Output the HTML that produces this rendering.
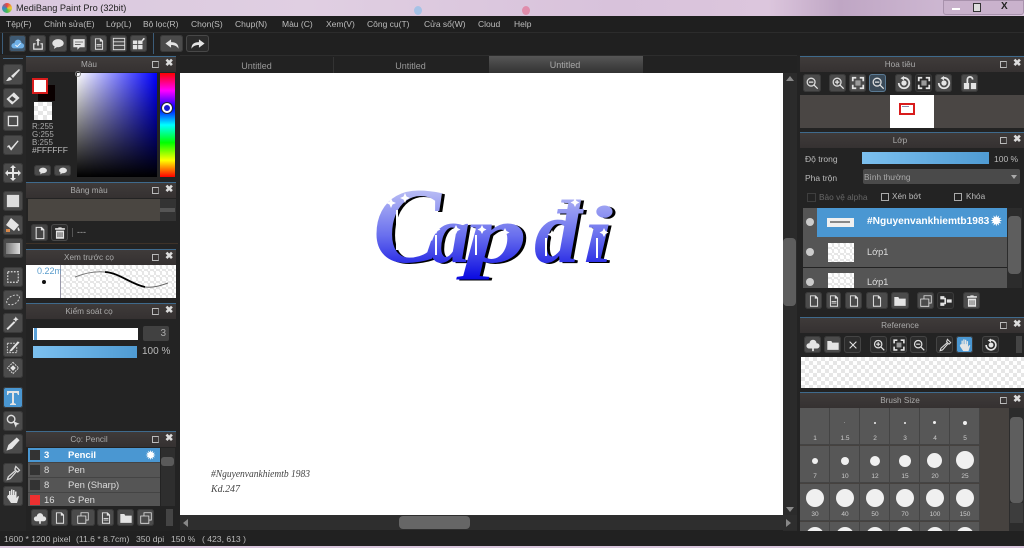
<!DOCTYPE html>
<html><head><meta charset="utf-8"><style>
html,body{margin:0;padding:0;width:1024px;height:548px;overflow:hidden;background:#212121}
body{position:relative;font-family:"Liberation Sans","Noto Sans CJK SC",sans-serif;color:#c9c9c9;font-size:9px;filter:blur(.35px)}
.a,.h,.b,.t,.l{position:absolute}
.a{display:block}
.t{white-space:nowrap;line-height:12px}
.h{box-sizing:border-box;padding-right:24px;background:linear-gradient(#3f3b3a,#353131);border-top:1px solid #3f6a8c;text-align:center;color:#aaa;font-size:8.200px;line-height:15px;height:16px}
.h i{position:absolute;top:2px;width:8px;height:8px}
.h .p{right:17px;border:1px solid #bbb;width:5px;height:5px;top:4px;border-right-color:#888}
.h .x{right:3px;color:#ddd;font-style:normal;font-weight:bold;font-size:10px;line-height:10px;top:2px}
.b{background:#4b4b4b;border-radius:3px;box-shadow:inset 0 0 0 1px #3a3a3a}
.b svg{position:absolute;left:50%;top:50%;transform:translate(-50%,-50%);fill:#e4e4e4;stroke:none}
.k{background-color:#fff;background-image:linear-gradient(45deg,#e6e6e6 25%,transparent 25%,transparent 75%,#e6e6e6 75%),linear-gradient(45deg,#e6e6e6 25%,transparent 25%,transparent 75%,#e6e6e6 75%);background-size:8px 8px;background-position:0 0,4px 4px}
.m{position:absolute;top:18px;font-size:8.500px;line-height:13px;color:#bdbdbd;white-space:nowrap}
.r{position:absolute;background:#555;border-bottom:1px solid #444;color:#ddd;font-size:9.500px}
.c{position:absolute;background:#575757;box-shadow:inset -1px -1px 0 #444;width:30px;height:37px}
.c b{position:absolute;left:0;right:0;top:27px;text-align:center;font-weight:normal;font-size:6.500px;color:#ccc;line-height:8px}
.c u{position:absolute;background:#f0f0f0;border-radius:50%}
.s{position:absolute;top:533px;font-size:8.600px;line-height:12px;color:#bbb;white-space:nowrap}
</style></head><body>
<svg width="0" height="0" style="position:absolute"><defs>
<symbol id="brush" viewBox="0 0 16 16"><path d="M14 2 6 9l2 2 7-8zM5 10c-2 0-2 2-4 4 3 0 6-1 6-2z"/></symbol>
<symbol id="eraser" viewBox="0 0 16 16"><path d="M9 2 15 8 7 15 1 9z"/><path d="M4 9l3-3 4 3-3 3z" fill="#444"/></symbol>
<symbol id="rect" viewBox="0 0 16 16"><path d="M2 2h12v12H2zM3.500 3.500v9h9v-9z" fill-rule="evenodd"/></symbol>
<symbol id="line" viewBox="0 0 16 16"><path d="M2 9l2-1 2 3 7-8 1 1-8 10-3-4-1 1z"/></symbol>
<symbol id="move" viewBox="0 0 16 16"><path d="M8 0l3 3H9v4h4V5l3 3-3 3V9H9v4h2l-3 3-3-3h2V9H3v2L0 8l3-3v2h4V3H5z"/></symbol>
<symbol id="fill" viewBox="0 0 16 16"><path d="M1 1h14v14H1z" fill="#ddd"/></symbol>
<symbol id="bucket" viewBox="0 0 16 16"><path d="M6 1l8 7-5 6-8-6zM13 10c2 2 2 4 1 4s-2-2-1-4z"/><path d="M1 12h4v3H1z" fill="#d8884a"/></symbol>
<symbol id="grad" viewBox="0 0 16 16"><path d="M1 3h14v11H1z" fill="url(#gr)"/></symbol>
<symbol id="marq" viewBox="0 0 16 16"><path d="M2 2h12v12H2z" fill="none" stroke="#ddd" stroke-dasharray="2 1.500" stroke-width="1.300"/></symbol>
<symbol id="lasso" viewBox="0 0 16 16"><path d="M2 11c-2-3 4-8 9-8s4 4 1 7-8 4-10 1z" fill="none" stroke="#ccc" stroke-dasharray="2 1.500"/></symbol>
<symbol id="wand" viewBox="0 0 16 16"><path d="M1 14l8-8 1.500 1.500-8 8zM11 1l1 2 2 1-2 1-1 2-1-2-2-1 2-1z"/></symbol>
<symbol id="edit" viewBox="0 0 16 16"><path d="M2 4h8M2 4v10h10V8" fill="none" stroke="#ccc" stroke-dasharray="2 1"/><path d="M5 11l8-9 2 1-8 9-3 1z"/></symbol>
<symbol id="sele" viewBox="0 0 16 16"><path d="M8 2l6 6-6 6-6-6z" fill="none" stroke="#ddd" stroke-dasharray="2 1"/><path d="M8 5l3 3-3 3-3-3z"/></symbol>
<symbol id="tt" viewBox="0 0 16 16"><path d="M2 1h12v4h-1l-1-2H9v10l2 1v1H5v-1l2-1V3H4L3 5H2z"/></symbol>
<symbol id="las2" viewBox="0 0 16 16"><circle cx="6" cy="6" r="4" fill="none" stroke="#ddd" stroke-width="1.500"/><path d="M8 8l7 3-3 1-1 3z"/></symbol>
<symbol id="pen" viewBox="0 0 16 16"><path d="M12 1l3 3-8 9-6 2 2-6z"/></symbol>
<symbol id="drop" viewBox="0 0 16 16"><path d="M11 1l4 4-2 2-1-1-7 8-3 1 1-3 8-7-1-1z" fill="none" stroke="#ddd" stroke-width="1.300"/></symbol>
<symbol id="hand" viewBox="0 0 16 16"><path d="M3 7l1 0V3h1.500v4H6V1.500h1.500V7H8V2h1.500v5h.5V3.500h1.500V10l1.500-2 1 .5L12 15H6L2 9z"/></symbol>
<symbol id="doc" viewBox="0 0 16 16"><path d="M3 1h7l3 3v11H3zM4.200 2.200v11.600h7.600V5H9V2.200z" fill-rule="evenodd"/></symbol>
<symbol id="trash" viewBox="0 0 16 16"><path d="M6 1h4v1h4v2H2V2h4zM3 5h10v10H3zM5 7v6h1V7zM7.500 7v6h1V7zM10 7v6h1V7z" fill-rule="evenodd"/></symbol>
<symbol id="cloud" viewBox="0 0 16 16"><path d="M4 6a4 4 0 0 1 8 0 3 3 0 0 1 1 6H9v3H7v-3H3a3 3 0 0 1 1-6z"/></symbol>
<symbol id="cloudb" viewBox="0 0 16 16"><path d="M4 7a4 4 0 0 1 8 0 3 3 0 0 1 0 6H3a3 3 0 0 1 1-6z" fill="#6fb0e6"/><path d="M5 9l2 2 4-4" fill="none" stroke="#fff"/></symbol>
<symbol id="share" viewBox="0 0 16 16"><path d="M8 1l3 3H9v6H7V4H5zM2 7h3v1.500H3.500v5h9v-5H11V7h3v8H2z"/></symbol>
<symbol id="bub" viewBox="0 0 16 16"><ellipse cx="8" cy="7" rx="7" ry="5"/><path d="M4 10l-1 4 5-3z"/></symbol>
<symbol id="chat" viewBox="0 0 16 16"><path d="M1 2h14v10H9l-3 3v-3H1z"/><path d="M3 5h10v1H3zM3 8h7v1H3z" fill="#555"/></symbol>
<symbol id="page" viewBox="0 0 16 16"><path d="M3 1h7l3 3v11H3zM4.200 2.200v11.600h7.600V5H9V2.200zM5 8h6v1H5zM5 10h6v1H5z" fill-rule="evenodd"/></symbol>
<symbol id="list" viewBox="0 0 16 16"><path d="M1 1h14v14H1zM2 2v3h12V2zM2 6v3h12V6zM2 10v4h12v-4z" fill-rule="evenodd"/></symbol>
<symbol id="grid" viewBox="0 0 16 16"><path d="M1 4h5v4H1zM7 4h5v4H7zM1 9h5v5H1zM7 9h5v5H7zM13 1l2 1-3 3-1-1z"/></symbol>
<symbol id="undo" viewBox="0 0 16 16"><path d="M7 3v3c5 0 8 2 8 7-2-3-4-4-8-4v3L1 7.500z"/></symbol>
<symbol id="redo" viewBox="0 0 16 16"><path d="M9 3v3C4 6 1 8 1 13c2-3 4-4 8-4v3l6-4.500z"/></symbol>
<symbol id="folder" viewBox="0 0 16 16"><path d="M1 3h5l1 2h8v9H1z"/></symbol>
<symbol id="copy" viewBox="0 0 16 16"><path d="M5 1h10v10h-3v4H1V5h4zM6 2v3h6v5h2V2zM2 6v8h9V6z" fill-rule="evenodd"/></symbol>
<symbol id="zi" viewBox="0 0 16 16"><circle cx="7" cy="7" r="4.500" fill="none" stroke="#ddd" stroke-width="1.500"/><path d="M10 11l1-1 4 4-1 1zM4.500 6.300h5v1.400h-5zM6.300 4.500h1.400v5H6.300z"/></symbol>
<symbol id="zo" viewBox="0 0 16 16"><circle cx="7" cy="7" r="4.500" fill="none" stroke="#ddd" stroke-width="1.500"/><path d="M10 11l1-1 4 4-1 1zM4.500 6.300h5v1.400h-5z"/></symbol>
<symbol id="fit" viewBox="0 0 16 16"><path d="M1 1h5v2H3v3H1zM10 1h5v5h-2V3h-3zM1 10h2v3h3v2H1zM13 10h2v5h-5v-2h3z"/><path d="M5 5h6v6H5z" fill="#999"/></symbol>
<symbol id="rot" viewBox="0 0 16 16"><path d="M8 1a7 7 0 1 1-7 7h2a5 5 0 1 0 5-5z"/><circle cx="8" cy="8" r="3"/><path d="M8 0v5L4 2.500z"/></symbol>
<symbol id="lock" viewBox="0 0 16 16"><path d="M1 8h6v7H1zM9 8h6v7H9zM4 8V4a4 4 0 0 1 8 0h-2a2 2 0 0 0-4 0v4z"/></symbol>
<symbol id="x" viewBox="0 0 16 16"><path d="M4 3l4 4 4-4 1 1-4 4 4 4-1 1-4-4-4 4-1-1 4-4-4-4z"/></symbol>
<symbol id="merge" viewBox="0 0 16 16"><path d="M1 2h5v4H1zM1 10h5v4H1zM9 6h6v4H9zM6 4h2v8H6z"/></symbol>
<linearGradient id="gr" x1="0" x2="1" y1="0" y2="0"><stop offset="0" stop-color="#777"/><stop offset="1" stop-color="#ddd"/></linearGradient>
</defs></svg>

<!-- title bar -->
<div class="a" style="left:0;top:0;width:1024px;height:16px;background:linear-gradient(90deg,#d9c8de,#e0cfe2 30%,#d8c2db 60%,#dcc6dd 75%,#bfa6c4 82%,#d8c4dc)"></div>
<div class="a" style="left:414px;top:6px;width:8px;height:9px;border-radius:50%;background:#a5c2e6"></div>
<div class="a" style="left:522px;top:6px;width:8px;height:9px;border-radius:50%;background:#e08dab"></div>
<div class="a" style="left:2px;top:3px;width:10px;height:10px;border-radius:50%;background:conic-gradient(#e44,#ec3,#4b5,#38c,#e44)"></div>
<div class="t" style="left:16px;top:2px;color:#222;font-size:9.200px">MediBang Paint Pro (32bit)</div>
<div class="a" style="left:943px;top:0;height:15px;background:#c9b2cc;border:1px solid #a892ac;border-radius:0 0 3px 3px;box-sizing:border-box;width:81px"></div>
<div class="a" style="left:952px;top:8px;width:8px;height:2px;background:#fff"></div>
<div class="a" style="left:973px;top:3px;width:6px;height:7px;border:1px solid #333;background:#ddd"></div>
<div class="t" style="left:1001px;top:1px;color:#222;font-weight:bold;font-size:10px">X</div>

<!-- menu -->
<div class="a" style="left:0;top:16px;width:1024px;height:16px;background:#1f1f1f"></div>
<div class="m" style="left:6px">Tệp(F)</div><div class="m" style="left:44px">Chỉnh sửa(E)</div><div class="m" style="left:106px">Lớp(L)</div><div class="m" style="left:143px">Bộ lọc(R)</div><div class="m" style="left:191px">Chọn(S)</div><div class="m" style="left:235px">Chụp(N)</div><div class="m" style="left:282px">Màu (C)</div><div class="m" style="left:326px">Xem(V)</div><div class="m" style="left:367px">Công cụ(T)</div><div class="m" style="left:424px">Cửa sổ(W)</div><div class="m" style="left:478px">Cloud</div><div class="m" style="left:514px">Help</div>

<!-- toolbar -->
<div class="a" style="left:0;top:32px;width:1024px;height:23px;background:#202020;border-top:1px solid #2c2c2c;box-sizing:border-box"></div>
<div class="a" style="left:2px;top:33px;width:1px;height:21px;background:#3c5c78"></div>
<div class="a" style="left:153px;top:33px;width:1px;height:21px;background:#3c5c78"></div>
<div class="b" style="left:9px;top:35px;width:17px;height:17px;background:#3f5a72"><svg width="14" height="14"><use href="#cloudb"/></svg></div>
<div class="b" style="left:29px;top:35px;width:17px;height:17px"><svg width="13" height="13"><use href="#share"/></svg></div>
<div class="b" style="left:49px;top:35px;width:18px;height:17px"><svg width="13" height="13"><use href="#bub"/></svg></div>
<div class="b" style="left:70px;top:35px;width:17px;height:17px"><svg width="13" height="13"><use href="#chat"/></svg></div>
<div class="b" style="left:90px;top:35px;width:17px;height:17px"><svg width="13" height="13"><use href="#page"/></svg></div>
<div class="b" style="left:110px;top:35px;width:17px;height:17px"><svg width="14" height="14"><use href="#list"/></svg></div>
<div class="b" style="left:130px;top:35px;width:17px;height:17px"><svg width="14" height="14"><use href="#grid"/></svg></div>
<div class="b" style="left:160px;top:35px;width:23px;height:17px"><svg width="15" height="15"><use href="#undo"/></svg></div>
<div class="b" style="left:186px;top:35px;width:23px;height:17px;background:#2a2a2a;box-shadow:inset 0 0 0 1px #484848"><svg width="15" height="15"><use href="#redo"/></svg></div>

<!-- left tools -->
<div class="a" style="left:0;top:55px;width:26px;height:476px;background:#262626"></div>
<div class="a" style="left:3px;top:58px;width:20px;height:1px;background:#4c6a84"></div>
<div class="b" style="left:3px;top:64px;width:20px;height:21px"><svg width="16" height="16"><use href="#brush"/></svg></div>
<div class="b" style="left:3px;top:88px;width:20px;height:20px"><svg width="15" height="15"><use href="#eraser"/></svg></div>
<div class="b" style="left:3px;top:111px;width:20px;height:20px"><svg width="14" height="14"><use href="#rect"/></svg></div>
<div class="b" style="left:3px;top:135px;width:20px;height:20px"><svg width="15" height="15"><use href="#line"/></svg></div>
<div class="b" style="left:3px;top:163px;width:20px;height:20px"><svg width="16" height="16"><use href="#move"/></svg></div>
<div class="b" style="left:3px;top:191px;width:20px;height:20px"><svg width="14" height="14"><use href="#fill"/></svg></div>
<div class="b" style="left:3px;top:215px;width:20px;height:20px"><svg width="16" height="16"><use href="#bucket"/></svg></div>
<div class="b" style="left:3px;top:238px;width:20px;height:20px"><svg width="16" height="16"><use href="#grad"/></svg></div>
<div class="b" style="left:3px;top:267px;width:20px;height:20px"><svg width="14" height="14"><use href="#marq"/></svg></div>
<div class="b" style="left:3px;top:290px;width:20px;height:20px"><svg width="16" height="16"><use href="#lasso"/></svg></div>
<div class="b" style="left:3px;top:313px;width:20px;height:20px"><svg width="15" height="15"><use href="#wand"/></svg></div>
<div class="b" style="left:3px;top:337px;width:20px;height:20px"><svg width="15" height="15"><use href="#edit"/></svg></div>
<div class="b" style="left:3px;top:358px;width:20px;height:20px"><svg width="15" height="15"><use href="#sele"/></svg></div>
<div class="b" style="left:3px;top:387px;width:20px;height:21px;background:#4a97d2"><svg width="16" height="16"><use href="#tt"/></svg></div>
<div class="b" style="left:3px;top:411px;width:20px;height:20px"><svg width="15" height="15"><use href="#las2"/></svg></div>
<div class="b" style="left:3px;top:434px;width:20px;height:20px"><svg width="15" height="15"><use href="#pen"/></svg></div>
<div class="b" style="left:3px;top:463px;width:20px;height:20px"><svg width="15" height="15"><use href="#drop"/></svg></div>
<div class="b" style="left:3px;top:486px;width:20px;height:20px"><svg width="16" height="16"><use href="#hand"/></svg></div>

<!-- left panel background -->
<div class="a" style="left:26px;top:55px;width:154px;height:476px;background:#232323"></div>

<!-- Màu -->
<div class="h" style="left:26px;top:56px;width:150px">Màu<i class="p"></i><i class="x">✖</i></div>
<div class="a" style="left:38px;top:85px;width:17px;height:16px;background:#0a0000"></div>
<div class="a" style="left:32px;top:78px;width:12px;height:12px;background:#fff;border:2px solid #d81c1c"></div>
<div class="a k" style="left:34px;top:102px;width:18px;height:18px;background-size:9px 9px"></div>
<div class="t" style="left:32px;top:123px;font-size:8px;line-height:8px;color:#aaa">R:255<br>G:255<br>B:255</div>
<div class="a" style="left:30px;top:145px;width:40px;height:4px;background:#232323"></div>
<div class="t" style="left:32px;top:145px;font-size:8.500px;line-height:10px;color:#bbb">#FFFFFF</div>
<div class="b" style="left:34px;top:165px;width:17px;height:11px"><svg width="9" height="9"><use href="#bub"/></svg></div>
<div class="b" style="left:54px;top:165px;width:17px;height:11px"><svg width="9" height="9"><use href="#bub"/></svg></div>
<div class="a" style="left:77px;top:73px;width:80px;height:104px;background:linear-gradient(transparent,#000),linear-gradient(90deg,#fff,#0000ff)"></div>
<div class="a" style="left:77px;top:73px;width:4px;height:4px;border:1px solid #888;border-radius:50%;transform:translate(-2px,-2px)"></div>
<div class="a" style="left:160px;top:73px;width:15px;height:104px;background:linear-gradient(#f00,#f0f 17%,#00f 34%,#0ff 50%,#0f0 67%,#ff0 84%,#f00)"></div>
<div class="a" style="left:162px;top:103px;width:6px;height:6px;border:2px solid #fff;border-radius:50%;background:#1a1ad0;box-shadow:0 0 0 1px #223"></div>

<!-- Bảng màu -->
<div class="h" style="left:26px;top:182px;width:150px">Bảng màu<i class="p"></i><i class="x">✖</i></div>
<div class="a" style="left:28px;top:199px;width:132px;height:22px;background:#4a4641"></div>
<div class="a" style="left:160px;top:199px;width:16px;height:22px;background:#333"></div>
<div class="a" style="left:160px;top:208px;width:15px;height:4px;background:#555"></div>
<div class="b" style="left:31px;top:224px;width:17px;height:17px;background:#444"><svg width="14" height="14"><use href="#doc"/></svg></div>
<div class="b" style="left:51px;top:224px;width:17px;height:17px;background:#2c2c2c;box-shadow:inset 0 0 0 1px #4a4a4a"><svg width="13" height="13"><use href="#trash"/></svg></div>
<div class="a" style="left:72px;top:228px;width:1px;height:9px;background:#555"></div>
<div class="t" style="left:77px;top:226px;color:#aaa">---</div>
<div class="a" style="left:26px;top:243px;width:152px;height:1px;background:#3e3228"></div>

<!-- Xem trước -->
<div class="h" style="left:26px;top:249px;width:150px">Xem trước cọ<i class="p"></i><i class="x">✖</i></div>
<div class="a k" style="left:60px;top:265px;width:116px;height:33px;background-size:6px 6px"></div>
<div class="a" style="left:26px;top:265px;width:34px;height:33px;background:#fff;border-right:1px solid #99a"></div>
<div class="t" style="left:37px;top:265px;width:24px;overflow:hidden;color:#5a9ccc;font-size:9px">0.22mm</div>
<div class="a" style="left:42px;top:280px;width:4px;height:4px;border-radius:50%;background:#111"></div>
<svg class="a" style="left:60px;top:265px" width="116" height="33"><path d="M15 12C25 8 35 6 45 7" fill="none" stroke="#777" stroke-width="1"/><path d="M45 7C60 8 70 19 85 22" fill="none" stroke="#000" stroke-width="1.800"/><path d="M85 22C95 23 102 20 108 18" fill="none" stroke="#666" stroke-width="1"/></svg>

<!-- Kiểm soát -->
<div class="h" style="left:26px;top:303px;width:150px">Kiểm soát cọ<i class="p"></i><i class="x">✖</i></div>
<div class="a" style="left:33px;top:328px;width:105px;height:12px;background:#fff"></div>
<div class="a" style="left:34px;top:328px;width:3px;height:12px;background:#5aa0d8"></div>
<div class="a" style="left:143px;top:326px;width:26px;height:15px;background:#414141;border-radius:2px"></div>
<div class="t" style="left:143px;top:328px;width:23px;text-align:right;font-size:10px;color:#aaa">3</div>
<div class="a" style="left:33px;top:346px;width:104px;height:12px;background:linear-gradient(90deg,#7cc0ef,#4f9bd3)"></div>
<div class="t" style="left:142px;top:346px;font-size:10px;color:#bbb">100 %</div>

<!-- Cọ -->
<div class="h" style="left:26px;top:431px;width:150px">Cọ: Pencil<i class="p"></i><i class="x">✖</i></div>
<div class="r" style="left:28px;top:448px;width:132px;height:14px;background:#4a97d2;color:#fff;font-weight:bold"><div class="a" style="left:2px;top:2px;width:10px;height:10px;background:#333"></div><span class="t" style="left:16px;top:2px">3</span><span class="t" style="left:40px;top:2px">Pencil</span><span class="t" style="left:118px;top:2px;font-size:11px">✹</span></div>
<div class="r" style="left:28px;top:463px;width:132px;height:14px"><div class="a" style="left:2px;top:2px;width:10px;height:10px;background:#333"></div><span class="t" style="left:16px;top:2px">8</span><span class="t" style="left:40px;top:2px">Pen</span></div>
<div class="r" style="left:28px;top:478px;width:132px;height:14px"><div class="a" style="left:2px;top:2px;width:10px;height:10px;background:#333"></div><span class="t" style="left:16px;top:2px">8</span><span class="t" style="left:40px;top:2px">Pen (Sharp)</span></div>
<div class="r" style="left:28px;top:493px;width:132px;height:13px;border:0"><div class="a" style="left:2px;top:2px;width:10px;height:10px;background:#ee3030"></div><span class="t" style="left:16px;top:2px">16</span><span class="t" style="left:40px;top:2px">G Pen</span></div>
<div class="a" style="left:161px;top:448px;width:14px;height:58px;background:#2e2e2e"></div>
<div class="a" style="left:161px;top:457px;width:13px;height:9px;background:#5a5a5a;border-radius:3px"></div>
<div class="b" style="left:31px;top:509px;width:17px;height:17px"><svg width="13" height="13"><use href="#cloud"/></svg></div>
<div class="b" style="left:51px;top:509px;width:17px;height:17px"><svg width="13" height="13"><use href="#doc"/></svg></div>
<div class="b" style="left:71px;top:509px;width:24px;height:17px"><svg width="13" height="13"><use href="#copy"/></svg></div>
<div class="b" style="left:97px;top:509px;width:17px;height:17px"><svg width="13" height="13"><use href="#page"/></svg></div>
<div class="b" style="left:117px;top:509px;width:17px;height:17px"><svg width="13" height="13"><use href="#folder"/></svg></div>
<div class="b" style="left:137px;top:509px;width:17px;height:17px"><svg width="13" height="13"><use href="#copy"/></svg></div>
<div class="a" style="left:166px;top:509px;width:7px;height:17px;background:#444"></div>

<!-- tabs -->
<div class="a" style="left:180px;top:55px;width:620px;height:18px;background:#222;border-top:1px solid #2d2d2d;box-sizing:border-box"></div>
<div class="t" style="left:180px;top:60px;width:153px;text-align:center;color:#999">Untitled</div>
<div class="a" style="left:333px;top:57px;width:1px;height:16px;background:#333"></div>
<div class="t" style="left:333px;top:60px;width:155px;text-align:center;color:#999">Untitled</div>
<div class="a" style="left:489px;top:56px;width:154px;height:17px;background:linear-gradient(#565656,#333)"></div>
<div class="t" style="left:488px;top:59px;width:154px;text-align:center;color:#aaa">Untitled</div>

<!-- canvas -->
<div class="a" style="left:180px;top:73px;width:603px;height:442px;background:#fff"></div>
<svg class="a" style="left:180px;top:73px" width="603" height="442">
<defs><linearGradient id="tg" gradientUnits="userSpaceOnUse" x1="0" x2="0" y1="117" y2="207"><stop offset="0" stop-color="#b9bdf4"/><stop offset=".5" stop-color="#6a70ee"/><stop offset="1" stop-color="#0808e0"/></linearGradient></defs>
<g font-family="Liberation Serif,serif" font-style="italic" font-weight="bold">
<g fill="#000" transform="translate(3,1)">
<text x="193" y="189" font-size="108" textLength="68" lengthAdjust="spacingAndGlyphs">C</text>
<text x="250" y="189" font-size="82" textLength="40" lengthAdjust="spacingAndGlyphs">a</text>
<text x="285" y="189" font-size="82" textLength="62" lengthAdjust="spacingAndGlyphs">p</text>
<text x="354" y="189" font-size="90" textLength="46" lengthAdjust="spacingAndGlyphs">đ</text>
<text x="403" y="189" font-size="82" textLength="30" lengthAdjust="spacingAndGlyphs">i</text>
</g>
<g fill="url(#tg)">
<text x="193" y="189" font-size="108" textLength="68" lengthAdjust="spacingAndGlyphs">C</text>
<text x="250" y="189" font-size="82" textLength="40" lengthAdjust="spacingAndGlyphs">a</text>
<text x="285" y="189" font-size="82" textLength="62" lengthAdjust="spacingAndGlyphs">p</text>
<text x="354" y="189" font-size="90" textLength="46" lengthAdjust="spacingAndGlyphs">đ</text>
<text x="403" y="189" font-size="82" textLength="30" lengthAdjust="spacingAndGlyphs">i</text>
</g>
</g>
<path d="M217 137v40M256 162v20M296 162v20M366 165v18M417 165v20" stroke="#fff" stroke-width="2" fill="none"/>
<path fill="#fff" d="M211 125l1.500 3.500 3.500 1.500-3.500 1.500-1.500 3.500-1.500-3.500-3.500-1.500 3.500-1.500zM225 120l1.500 3.500 3.500 1.500-3.500 1.500-1.500 3.500-1.500-3.500-3.500-1.500 3.500-1.500zM230 131l1.500 3.500 3.500 1.500-3.500 1.500-1.500 3.500-1.500-3.500-3.500-1.500 3.500-1.500zM256 152l1.500 3 3 1.500-3 1.500-1.500 3-1.500-3-3-1.500 3-1.500zM276 152l1.500 3 3 1.500-3 1.500-1.500 3-1.500-3-3-1.500 3-1.500zM302 152l1.500 3 3 1.500-3 1.500-1.500 3-1.500-3-3-1.500 3-1.500zM325 155l1.500 3 3 1.500-3 1.500-1.500 3-1.500-3-3-1.500 3-1.500zM372 157l1.500 3 3 1.500-3 1.500-1.500 3-1.500-3-3-1.500 3-1.500zM395 125l1.500 3 3 1.500-3 1.500-1.500 3-1.500-3-3-1.500 3-1.500zM424 155l1.500 3 3 1.500-3 1.500-1.500 3-1.500-3-3-1.500 3-1.500z"/>
<g font-family="Liberation Serif,serif" font-style="italic" fill="#444" font-size="11">
<text x="31" y="404" textLength="99" lengthAdjust="spacingAndGlyphs">#Nguyenvankhiemtb 1983</text>
<text x="31" y="419" textLength="29" lengthAdjust="spacingAndGlyphs">Kd.247</text>
</g>
</svg>

<!-- scrollbars -->
<div class="a" style="left:783px;top:73px;width:14px;height:458px;background:#2b2b2b"></div>
<div class="a" style="left:783px;top:238px;width:13px;height:68px;background:#5d5d5d;border-radius:4px"></div>
<div class="a" style="left:180px;top:515px;width:617px;height:15px;background:#2e2e2e"></div>
<div class="a" style="left:399px;top:516px;width:71px;height:13px;background:#666;border-radius:4px"></div>
<div class="a" style="left:183px;top:519px;width:0;height:0;border:4px solid transparent;border-right:5px solid #888;border-left:0"></div>
<div class="a" style="left:786px;top:519px;width:0;height:0;border:4px solid transparent;border-left:5px solid #888;border-right:0"></div>
<div class="a" style="left:786px;top:76px;width:0;height:0;border:4px solid transparent;border-bottom:5px solid #888;border-top:0"></div>
<div class="a" style="left:786px;top:507px;width:0;height:0;border:4px solid transparent;border-top:5px solid #888;border-bottom:0"></div>

<!-- right panel -->
<div class="a" style="left:797px;top:55px;width:227px;height:476px;background:#232323"></div>
<div class="h" style="left:800px;top:56px;width:224px">Hoa tiêu<i class="p"></i><i class="x">✖</i></div>
<div class="b" style="left:803px;top:74px;width:18px;height:18px"><svg width="14" height="14"><use href="#zo"/></svg></div>
<div class="b" style="left:829px;top:74px;width:17px;height:18px"><svg width="14" height="14"><use href="#zi"/></svg></div>
<div class="b" style="left:849px;top:74px;width:17px;height:18px"><svg width="14" height="14"><use href="#fit"/></svg></div>
<div class="b" style="left:869px;top:74px;width:17px;height:18px;background:#3a4a58;box-shadow:inset 0 0 0 1px #5a7a94"><svg width="14" height="14"><use href="#zo"/></svg></div>
<div class="b" style="left:895px;top:74px;width:17px;height:18px"><svg width="14" height="14"><use href="#rot"/></svg></div>
<div class="b" style="left:915px;top:74px;width:17px;height:18px;background:#2a2a2a"><svg width="14" height="14"><use href="#fit"/></svg></div>
<div class="b" style="left:935px;top:74px;width:17px;height:18px"><svg width="14" height="14"><use href="#rot"/></svg></div>
<div class="b" style="left:961px;top:74px;width:17px;height:18px"><svg width="14" height="14"><use href="#lock"/></svg></div>
<div class="a" style="left:800px;top:95px;width:224px;height:33px;background:#4a4644"></div>
<div class="a" style="left:890px;top:95px;width:44px;height:33px;background:#fff"></div>
<div class="a" style="left:899px;top:103px;width:12px;height:8px;border:2px solid #d81c1c"></div>
<div class="a" style="left:902px;top:106px;width:7px;height:1px;background:#88a"></div>

<!-- Lớp -->
<div class="h" style="left:800px;top:132px;width:224px">Lớp<i class="p"></i><i class="x">✖</i></div>
<div class="t" style="left:805px;top:153px;font-size:8.500px;color:#bbb">Độ trong</div>
<div class="a" style="left:862px;top:152px;width:127px;height:12px;background:linear-gradient(90deg,#7cc0ef,#4f9bd3)"></div>
<div class="t" style="left:994px;top:153px;font-size:8.500px;color:#bbb">100 %</div>
<div class="t" style="left:805px;top:172px;font-size:8.500px;color:#bbb">Pha trộn</div>
<div class="a" style="left:863px;top:169px;width:157px;height:15px;background:#4a4a4a;border-radius:2px"></div>
<div class="t" style="left:864px;top:171px;font-size:8.300px;color:#aaa">Bình thường</div>
<div class="a" style="left:1011px;top:175px;width:0;height:0;border:3px solid transparent;border-top:4px solid #aaa;border-bottom:0"></div>
<div class="a" style="left:807px;top:193px;width:7px;height:7px;border:1px solid #3e3e3e"></div>
<div class="t" style="left:819px;top:191px;font-size:8.300px;color:#666">Bảo vệ alpha</div>
<div class="a" style="left:881px;top:193px;width:6px;height:6px;border:1px solid #aaa"></div>
<div class="t" style="left:892px;top:191px;font-size:8.200px;color:#bbb">Xén bớt</div>
<div class="a" style="left:954px;top:193px;width:6px;height:6px;border:1px solid #aaa"></div>
<div class="t" style="left:966px;top:191px;font-size:8.200px;color:#bbb">Khóa</div>

<div class="a" style="left:803px;top:208px;width:214px;height:30px;background:#555"></div>
<div class="a" style="left:817px;top:208px;width:190px;height:29px;background:#4a97d2"></div>
<div class="a" style="left:803px;top:238px;width:204px;height:29px;background:#555"></div>
<div class="a" style="left:803px;top:268px;width:204px;height:20px;background:#555"></div>
<div class="a" style="left:1007px;top:208px;width:15px;height:80px;background:#2c2c2c"></div>
<div class="a" style="left:1008px;top:216px;width:13px;height:58px;background:#5e5e5e;border-radius:4px"></div>
<div class="a" style="left:806px;top:218px;width:8px;height:8px;border-radius:50%;background:#ccc"></div>
<div class="a" style="left:806px;top:248px;width:8px;height:8px;border-radius:50%;background:#ccc"></div>
<div class="a" style="left:806px;top:278px;width:8px;height:8px;border-radius:50%;background:#ccc"></div>
<div class="a" style="left:827px;top:218px;width:27px;height:9px;background:#f0f0f0"></div>
<div class="a" style="left:830px;top:221px;width:20px;height:2px;background:#888"></div>
<div class="a k" style="left:828px;top:243px;width:26px;height:19px;background-size:6px 6px"></div>
<div class="a k" style="left:828px;top:273px;width:26px;height:15px;background-size:6px 6px"></div>
<div class="t" style="left:867px;top:216px;color:#fff;font-weight:bold;font-size:10.200px">#Nguyenvankhiemtb1983</div>
<div class="t" style="left:990px;top:216px;color:#fff;font-size:15px">✹</div>
<div class="t" style="left:867px;top:246px;color:#ddd;font-size:9.200px">Lớp1</div>
<div class="t" style="left:867px;top:276px;color:#ddd;font-size:9.200px">Lớp1</div>

<div class="b" style="left:805px;top:292px;width:17px;height:17px"><svg width="13" height="13"><use href="#doc"/></svg></div>
<div class="b" style="left:826px;top:292px;width:15px;height:17px"><svg width="13" height="13"><use href="#page"/></svg></div>
<div class="b" style="left:845px;top:292px;width:17px;height:17px"><svg width="13" height="13"><use href="#doc"/></svg></div>
<div class="b" style="left:866px;top:292px;width:22px;height:17px"><svg width="13" height="13"><use href="#doc"/></svg></div>
<div class="b" style="left:891px;top:292px;width:18px;height:17px"><svg width="13" height="13"><use href="#folder"/></svg></div>
<div class="b" style="left:917px;top:292px;width:17px;height:17px"><svg width="13" height="13"><use href="#copy"/></svg></div>
<div class="b" style="left:937px;top:292px;width:17px;height:17px;background:#2a2a2a"><svg width="13" height="13"><use href="#merge"/></svg></div>
<div class="b" style="left:963px;top:292px;width:17px;height:17px"><svg width="13" height="13"><use href="#trash"/></svg></div>

<!-- Reference -->
<div class="h" style="left:800px;top:317px;width:224px">Reference<i class="p"></i><i class="x">✖</i></div>
<div class="b" style="left:804px;top:336px;width:17px;height:17px"><svg width="14" height="14"><use href="#cloud"/></svg></div>
<div class="b" style="left:824px;top:336px;width:17px;height:17px"><svg width="13" height="13"><use href="#folder"/></svg></div>
<div class="b" style="left:844px;top:336px;width:17px;height:17px;background:#2c2c2c;box-shadow:inset 0 0 0 1px #444"><svg width="12" height="12"><use href="#x"/></svg></div>
<div class="b" style="left:870px;top:336px;width:17px;height:17px;background:#2c2c2c;box-shadow:inset 0 0 0 1px #444"><svg width="13" height="13"><use href="#zi"/></svg></div>
<div class="b" style="left:890px;top:336px;width:17px;height:17px;background:#2c2c2c;box-shadow:inset 0 0 0 1px #444"><svg width="13" height="13"><use href="#fit"/></svg></div>
<div class="b" style="left:910px;top:336px;width:17px;height:17px;background:#2c2c2c;box-shadow:inset 0 0 0 1px #444"><svg width="13" height="13"><use href="#zo"/></svg></div>
<div class="b" style="left:936px;top:336px;width:17px;height:17px;background:#2c2c2c;box-shadow:inset 0 0 0 1px #444"><svg width="13" height="13"><use href="#drop"/></svg></div>
<div class="b" style="left:956px;top:336px;width:17px;height:17px;background:#4a97d2"><svg width="14" height="14"><use href="#hand"/></svg></div>
<div class="b" style="left:982px;top:336px;width:17px;height:17px;background:#2c2c2c;box-shadow:inset 0 0 0 1px #444"><svg width="13" height="13"><use href="#rot"/></svg></div>
<div class="a" style="left:1016px;top:336px;width:6px;height:17px;background:#444"></div>
<div class="a k" style="left:801px;top:357px;width:223px;height:31px;background-size:8px 8px"></div>

<!-- Brush Size -->
<div class="h" style="left:800px;top:392px;width:224px">Brush Size<i class="p"></i><i class="x">✖</i></div>
<div class="a" style="left:800px;top:408px;width:219px;height:123px;background:#46423f;overflow:hidden">
<div class="c" style="left:0;top:0"><b>1</b></div>
<div class="c" style="left:30px;top:0"><u style="left:14px;top:14px;width:1px;height:1px;background:#999"></u><b>1.5</b></div>
<div class="c" style="left:60px;top:0"><u style="left:14px;top:14px;width:2px;height:2px"></u><b>2</b></div>
<div class="c" style="left:90px;top:0"><u style="left:14px;top:14px;width:2px;height:2px"></u><b>3</b></div>
<div class="c" style="left:120px;top:0"><u style="left:13px;top:13px;width:3px;height:3px"></u><b>4</b></div>
<div class="c" style="left:150px;top:0"><u style="left:13px;top:13px;width:4px;height:4px"></u><b>5</b></div>
<div class="c" style="left:0;top:38px"><u style="left:12px;top:12px;width:6px;height:6px"></u><b>7</b></div>
<div class="c" style="left:30px;top:38px"><u style="left:11px;top:11px;width:8px;height:8px"></u><b>10</b></div>
<div class="c" style="left:60px;top:38px"><u style="left:10px;top:10px;width:10px;height:10px"></u><b>12</b></div>
<div class="c" style="left:90px;top:38px"><u style="left:9px;top:9px;width:12px;height:12px"></u><b>15</b></div>
<div class="c" style="left:120px;top:38px"><u style="left:7px;top:7px;width:15px;height:15px"></u><b>20</b></div>
<div class="c" style="left:150px;top:38px"><u style="left:6px;top:5px;width:18px;height:18px"></u><b>25</b></div>
<div class="c" style="left:0;top:76px"><u style="left:6px;top:5px;width:18px;height:18px"></u><b>30</b></div>
<div class="c" style="left:30px;top:76px"><u style="left:6px;top:5px;width:18px;height:18px"></u><b>40</b></div>
<div class="c" style="left:60px;top:76px"><u style="left:6px;top:5px;width:18px;height:18px"></u><b>50</b></div>
<div class="c" style="left:90px;top:76px"><u style="left:6px;top:5px;width:18px;height:18px"></u><b>70</b></div>
<div class="c" style="left:120px;top:76px"><u style="left:6px;top:5px;width:18px;height:18px"></u><b>100</b></div>
<div class="c" style="left:150px;top:76px"><u style="left:6px;top:5px;width:18px;height:18px"></u><b>150</b></div>
<div class="c" style="left:0;top:114px"><u style="left:6px;top:5px;width:18px;height:18px"></u></div>
<div class="c" style="left:30px;top:114px"><u style="left:6px;top:5px;width:18px;height:18px"></u></div>
<div class="c" style="left:60px;top:114px"><u style="left:6px;top:5px;width:18px;height:18px"></u></div>
<div class="c" style="left:90px;top:114px"><u style="left:6px;top:5px;width:18px;height:18px"></u></div>
<div class="c" style="left:120px;top:114px"><u style="left:6px;top:5px;width:18px;height:18px"></u></div>
<div class="c" style="left:150px;top:114px"><u style="left:6px;top:5px;width:18px;height:18px"></u></div>
</div>
<div class="a" style="left:1009px;top:408px;width:15px;height:123px;background:#2c2c2c"></div>
<div class="a" style="left:1010px;top:417px;width:13px;height:86px;background:#5e5e5e;border-radius:4px"></div>
<div class="a" style="left:1010px;top:503px;width:13px;height:20px;background:#3d3d3d"></div>

<!-- status -->
<div class="a" style="left:0;top:531px;width:1024px;height:15px;background:#212121"></div>
<div class="s" style="left:4px">1600 * 1200 pixel</div><div class="s" style="left:76px">(11.6 * 8.7cm)</div><div class="s" style="left:136px">350 dpi</div><div class="s" style="left:171px">150 %</div><div class="s" style="left:202px">( 423, 613 )</div>
<div class="a" style="left:0;top:546px;width:1024px;height:2px;background:#d9c6dd"></div>
</body></html>
